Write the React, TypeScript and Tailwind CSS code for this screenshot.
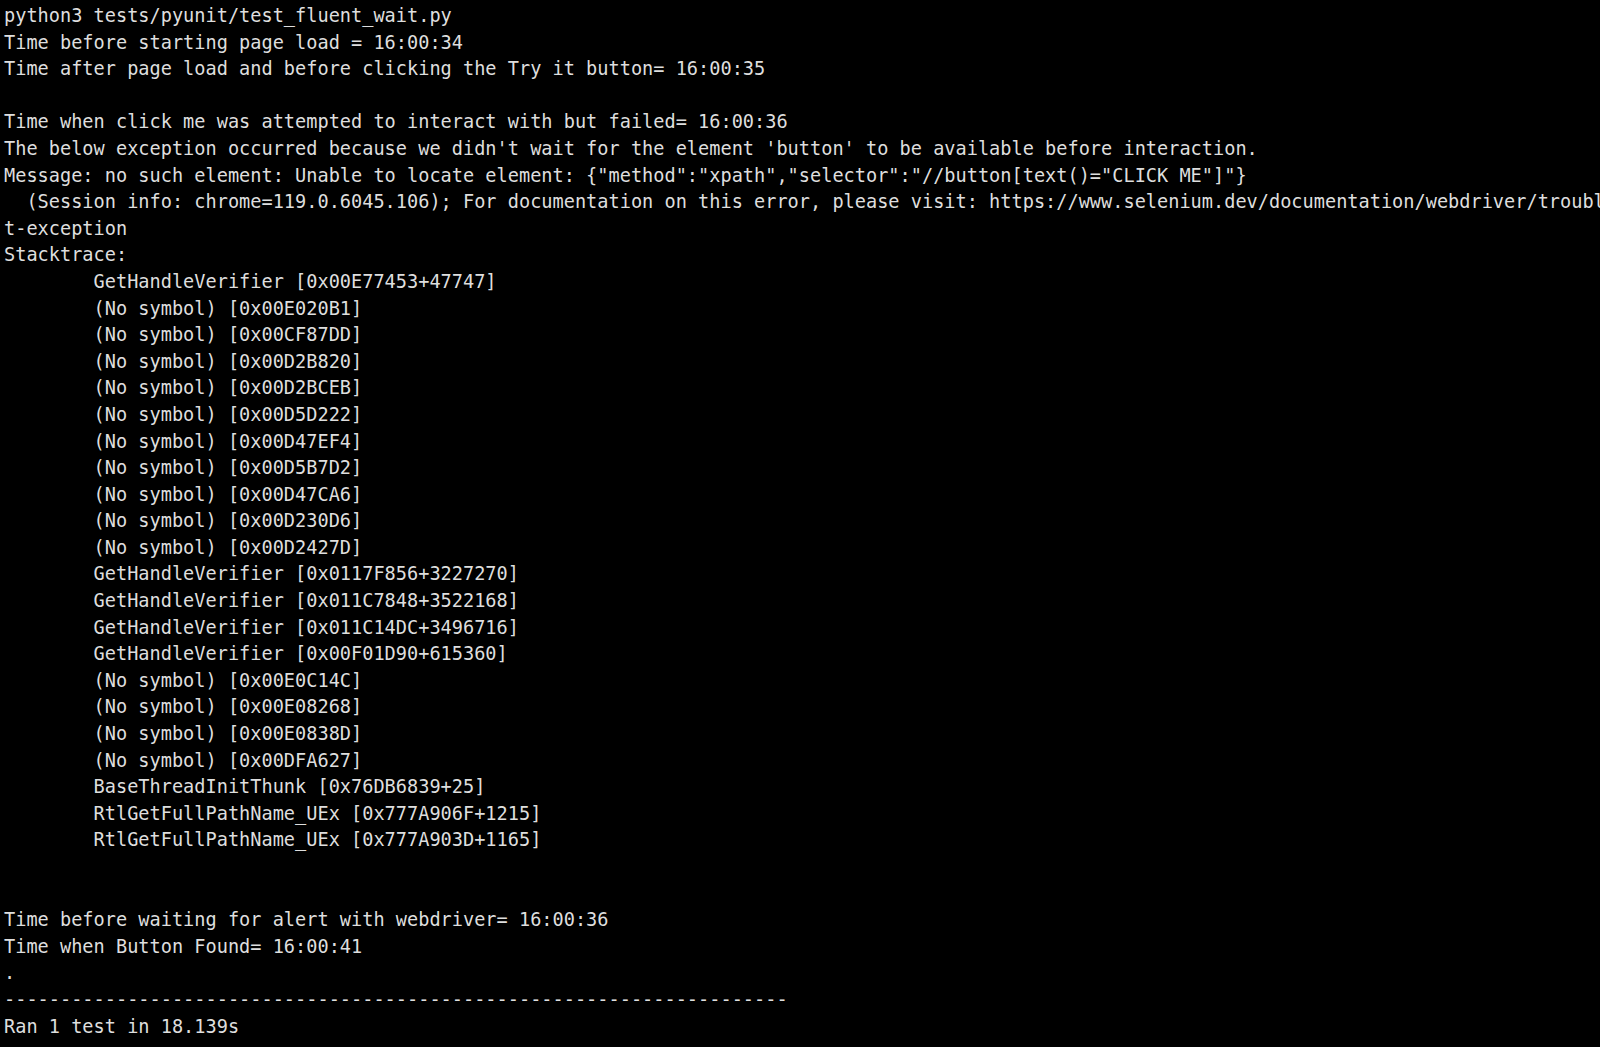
const lines = [
  'python3 tests/pyunit/test_fluent_wait.py',
  'Time before starting page load = 16:00:34',
  'Time after page load and before clicking the Try it button= 16:00:35',
  '',
  'Time when click me was attempted to interact with but failed= 16:00:36',
  "The below exception occurred because we didn't wait for the element 'button' to be available before interaction.",
  'Message: no such element: Unable to locate element: {"method":"xpath","selector":"//button[text()="CLICK ME"]"}',
  '  (Session info: chrome=119.0.6045.106); For documentation on this error, please visit: https://www.selenium.dev/documentation/webdriver/troubleshooting/errors#no-such-elemen',
  't-exception',
  'Stacktrace:',
  '\tGetHandleVerifier [0x00E77453+47747]',
  '\t(No symbol) [0x00E020B1]',
  '\t(No symbol) [0x00CF87DD]',
  '\t(No symbol) [0x00D2B820]',
  '\t(No symbol) [0x00D2BCEB]',
  '\t(No symbol) [0x00D5D222]',
  '\t(No symbol) [0x00D47EF4]',
  '\t(No symbol) [0x00D5B7D2]',
  '\t(No symbol) [0x00D47CA6]',
  '\t(No symbol) [0x00D230D6]',
  '\t(No symbol) [0x00D2427D]',
  '\tGetHandleVerifier [0x0117F856+3227270]',
  '\tGetHandleVerifier [0x011C7848+3522168]',
  '\tGetHandleVerifier [0x011C14DC+3496716]',
  '\tGetHandleVerifier [0x00F01D90+615360]',
  '\t(No symbol) [0x00E0C14C]',
  '\t(No symbol) [0x00E08268]',
  '\t(No symbol) [0x00E0838D]',
  '\t(No symbol) [0x00DFA627]',
  '\tBaseThreadInitThunk [0x76DB6839+25]',
  '\tRtlGetFullPathName_UEx [0x777A906F+1215]',
  '\tRtlGetFullPathName_UEx [0x777A903D+1165]',
  '',
  '',
  'Time before waiting for alert with webdriver= 16:00:36',
  'Time when Button Found= 16:00:41',
  '.',
  '----------------------------------------------------------------------',
  'Ran 1 test in 18.139s',
]

export default function App() {
  return (
    <div className="w-[1600px] h-[1047px] overflow-hidden bg-black pt-[3px] pl-1 text-[#dedede] font-['DejaVu_Sans_Mono',monospace] text-[18.6px] leading-[26.6px]">
      {lines.map((line, i) => (
        <div key={i} className="whitespace-pre [tab-size:8] h-[26.6px]">
          {line}
        </div>
      ))}
    </div>
  )
}
